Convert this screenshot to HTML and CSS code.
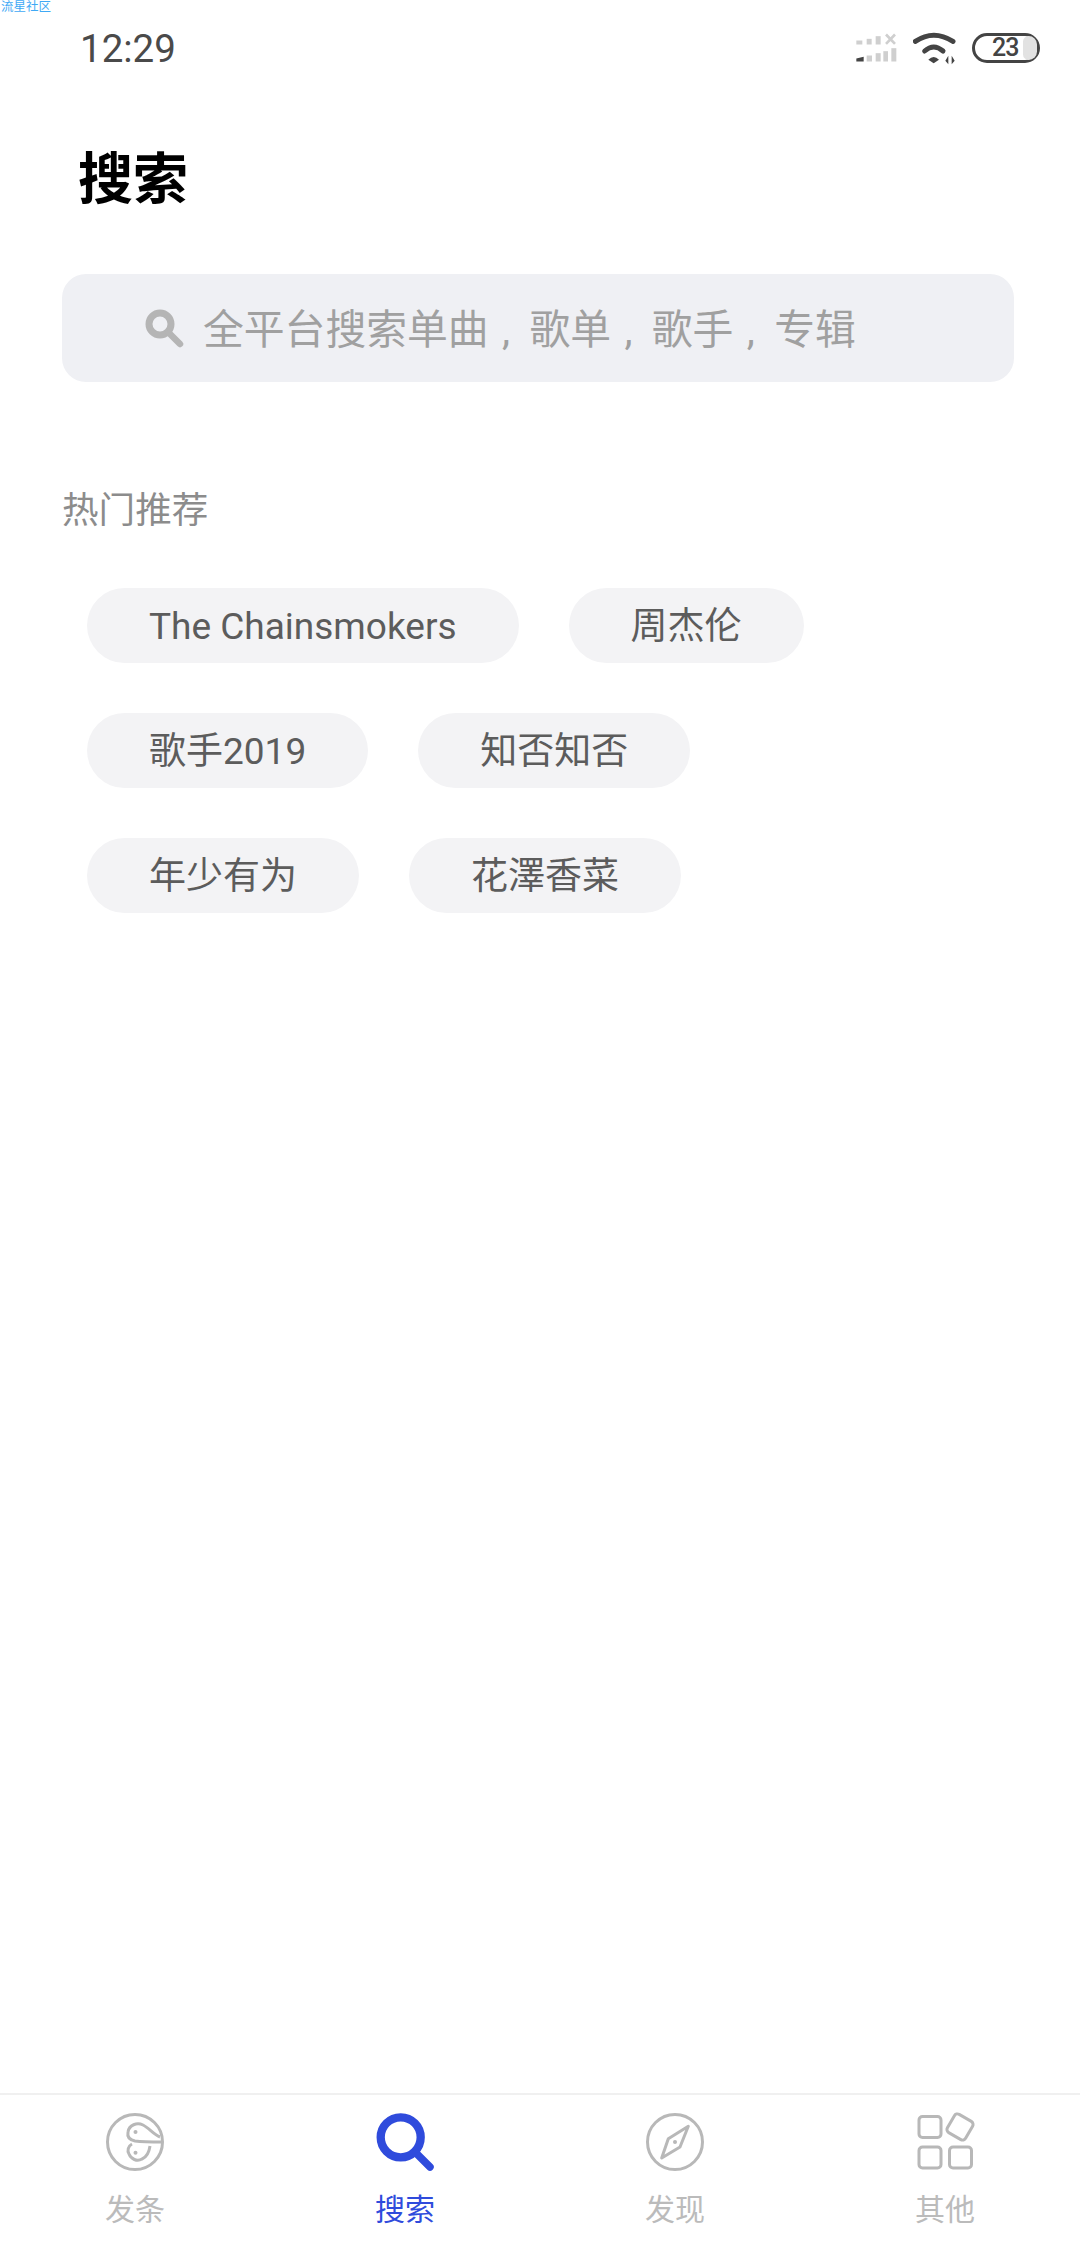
FILE: index.html
```html
<!DOCTYPE html>
<html lang="zh-CN">
<head>
  <meta charset="UTF-8">
  <title>搜索</title>
  <meta name="viewport" content="width=device-width, initial-scale=1.0">
  <link rel="stylesheet" href="styles.css">
</head>
<body>

  <div class="watermark">流星社区</div>

  <div class="status-bar">
    <span class="time">12:29</span>
    <div class="status-icons">
      <svg class="signal" viewBox="110 70 135 95" width="45" height="32">
        <g fill="#cfcfcf">
          <rect x="117" y="95" width="18" height="12"/>
          <rect x="148" y="90" width="15" height="17"/>
          <rect x="175" y="82" width="15" height="25"/>
          <rect x="148" y="140" width="16" height="18"/>
          <rect x="175" y="133" width="15" height="25"/>
          <rect x="198" y="127" width="14" height="31"/>
          <rect x="222" y="118" width="15" height="40"/>
        </g>
        <path d="M206 77l27 28M233 77l-27 28" stroke="#cfcfcf" stroke-width="8" fill="none"/>
        <path d="M117 149l22-5v14h-22z" fill="#444"/>
      </svg>
      <svg class="wifi" viewBox="285 62 135 105" width="45" height="35">
        <g fill="none" stroke="#444" stroke-linecap="round">
          <path d="M292 93Q347 56 405 93" stroke-width="15"/>
          <path d="M320 122Q347 98 375 122" stroke-width="15"/>
        </g>
        <path d="M331 148Q347 132 363 148L347 159z" fill="#444"/>
        <path d="M391 136v26l-9-11zM401 136v26l9-11z" fill="#444"/>
      </svg>
      <div class="battery">
        <span class="battery-num">23</span>
        <span class="battery-level"></span>
      </div>
    </div>
  </div>

  <h1 class="title">搜索</h1>

  <div class="search-box">
    <svg class="search-icon" viewBox="0 0 40 40" width="40" height="40">
      <circle cx="15" cy="16" r="11" fill="none" stroke="#b5b5b5" stroke-width="7"/>
      <path d="M24 25l11 11" stroke="#b5b5b5" stroke-width="6.5" stroke-linecap="round"/>
    </svg>
    <span class="placeholder">全平台搜索单曲<span class="comma">,</span>歌单<span class="comma">,</span>歌手<span class="comma">,</span>专辑</span>
  </div>

  <div class="hot-title">热门推荐</div>

  <div class="tags">
    <div class="tag-row">
      <span class="tag">The Chainsmokers</span>
      <span class="tag">周杰伦</span>
    </div>
    <div class="tag-row">
      <span class="tag">歌手2019</span>
      <span class="tag">知否知否</span>
    </div>
    <div class="tag-row">
      <span class="tag">年少有为</span>
      <span class="tag">花澤香菜</span>
    </div>
  </div>

  <div class="tabbar">
    <div class="tab">
      <svg viewBox="0 0 60 60" width="60" height="60" class="tab-icon">
        <circle cx="30" cy="30" r="27.5"/>
        <path d="M55 25C49 23 44 16 38 13C32 10 24 13 23 20C22 25 25 28 30 29C38 30 48 30 57 30"/>
        <path d="M27 32C23 34 22 39 24 42C26 47 32 50 37 47C42 45 44 41 45 34"/>
        <circle class="dot" cx="30.5" cy="20" r="2"/>
        <circle class="dot" cx="30.5" cy="40.7" r="2"/>
      </svg>
      <span>发条</span>
    </div>
    <div class="tab active">
      <svg viewBox="0 0 60 60" width="60" height="60" class="tab-icon">
        <circle cx="25.7" cy="25.3" r="20" stroke-width="8.3"/>
        <path d="M41 41L55 55" stroke-width="7.5" stroke-linecap="round"/>
      </svg>
      <span>搜索</span>
    </div>
    <div class="tab">
      <svg viewBox="0 0 60 60" width="60" height="60" class="tab-icon">
        <circle cx="30" cy="30" r="27.5"/>
        <path d="M43.3 14.3L35 35L16.7 46L23.3 26.7z" stroke-linejoin="round"/>
        <circle class="dot" cx="30" cy="30" r="2"/>
      </svg>
      <span>发现</span>
    </div>
    <div class="tab">
      <svg viewBox="0 0 60 60" width="60" height="60" class="tab-icon">
        <rect x="4" y="4.5" width="22" height="21" rx="3.5"/>
        <rect x="34.5" y="4.5" width="21" height="21" rx="3.5" transform="rotate(30 45 15)"/>
        <rect x="4" y="35" width="22" height="21" rx="3.5"/>
        <rect x="34.5" y="35" width="22" height="21" rx="3.5"/>
      </svg>
      <span>其他</span>
    </div>
  </div>

</body>
</html>
```

FILE: styles.css
```css
* {
  box-sizing: border-box;
}

body {
  margin: 0;
  height: 2248px;
  display: flex;
  flex-direction: column;
  position: relative;
  overflow: hidden;
  background: #fff;
  font-family: Roboto, "Noto Sans CJK SC", sans-serif;
}

.watermark {
  position: absolute;
  top: -1px;
  left: 1px;
  font-size: 12.5px;
  line-height: 15px;
  color: #3fa9f5;
}

.status-bar {
  height: 96px;
  padding: 0 40px 0 80px;
  display: flex;
  justify-content: space-between;
  align-items: center;
}

.time {
  font-size: 38.5px;
  font-weight: 400;
  color: #4a4a4a;
}

.status-icons {
  display: flex;
  align-items: center;
}

.signal {
  margin-right: 14px;
}

.wifi {
  margin-right: 14px;
}

.battery {
  width: 68px;
  height: 30px;
  padding-left: 17px;
  border: 3px solid #444;
  border-radius: 15px;
  display: flex;
  justify-content: space-between;
  align-items: stretch;
}

.battery-num {
  font-size: 25px;
  font-weight: 500;
  line-height: 24px;
  letter-spacing: -1px;
  color: #444;
}

.battery-level {
  width: 14px;
  background: #e2e2e2;
  border-radius: 8px 12px 12px 8px;
}

.title {
  margin: 51px 0 0 78px;
  font-size: 55px;
  line-height: 64px;
  font-weight: 700;
  color: #000;
}

.search-box {
  margin: 63px 66px 0 62px;
  height: 108px;
  padding-left: 83px;
  border-radius: 24px;
  background: #eff0f4;
  display: flex;
  align-items: center;
}

.search-icon {
  margin-right: 18px;
}

.placeholder {
  margin-top: -3px;
  font-size: 40.8px;
  color: #a0a0a0;
}

.comma {
  display: inline-block;
  width: 1em;
  padding-left: 0.33em;
}

.hot-title {
  margin: 103px 0 0 62px;
  font-size: 36.6px;
  line-height: 52px;
  color: #8c8c8c;
}

.tags {
  margin: 51px 0 0 87px;
  display: flex;
  flex-direction: column;
  gap: 50px;
}

.tag-row {
  display: flex;
  gap: 50px;
}

.tag {
  height: 75px;
  padding: 0 62px;
  border-radius: 38px;
  background: #f3f3f5;
  font-size: 37px;
  line-height: 77px;
  color: #5c5c5c;
}

.tabbar {
  margin-top: auto;
  height: 155px;
  border-top: 2px solid #f0f0f0;
  display: grid;
  grid-template-columns: repeat(4, 270px);
}

.tab {
  padding-top: 17px;
  display: flex;
  flex-direction: column;
  align-items: center;
  font-size: 30px;
  line-height: 44px;
  color: #bbb;
}

.tab span {
  margin-top: 16px;
}

.tab.active {
  color: #2f4bdc;
}

.tab-icon {
  fill: none;
  stroke: #b8b8b8;
  stroke-width: 3;
}

.tab-icon .dot {
  fill: #b8b8b8;
  stroke: none;
}

.tab.active .tab-icon {
  stroke: #2f4bdc;
}
```
